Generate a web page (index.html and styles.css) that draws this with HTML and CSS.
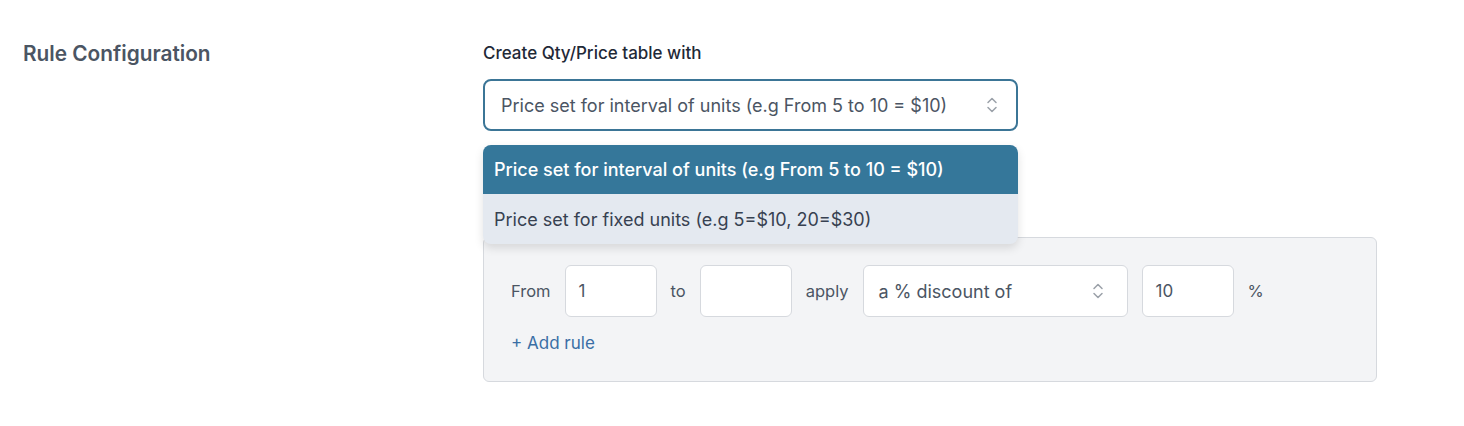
FILE: index.html
```html
<!DOCTYPE html>
<html lang="en">
<head>
    <meta charset="UTF-8">
    <meta name="viewport" content="width=device-width, initial-scale=1.0">
    <title>Rule Configuration</title>
    <link rel="stylesheet" href="styles.css">
</head>
<body>
    <div class="settings">
        <h2 class="sectionTitle">Rule Configuration</h2>
        <div class="sectionBody">
            <label class="fieldLabel">Create Qty/Price table with</label>
            <div class="selectWrap">
                <div class="select selectFocused">
                    <span>Price set for interval of units (e.g From 5 to 10 = $10)</span>
                    <svg class="chevrons" width="12" height="18" viewBox="0 0 12 18"><path d="M2 6.5L6 2.5L10 6.5M2 11.5L6 15.5L10 11.5" fill="none" stroke="#9aa0a8" stroke-width="1.5" stroke-linecap="round" stroke-linejoin="round"/></svg>
                </div>
                <ul class="menu">
                    <li class="menuItem active">Price set for interval of units (e.g From 5 to 10 = $10)</li>
                    <li class="menuItem">Price set for fixed units (e.g 5=$10, 20=$30)</li>
                </ul>
            </div>

            <div class="rulesBox">
                <div class="ruleRow">
                    <span class="ruleText">From</span>
                    <div class="input">1</div>
                    <span class="ruleText">to</span>
                    <div class="input"></div>
                    <span class="ruleText">apply</span>
                    <div class="input wideSelect">
                        <span>a % discount of</span>
                        <svg class="chevrons" width="12" height="18" viewBox="0 0 12 18"><path d="M2 6.5L6 2.5L10 6.5M2 11.5L6 15.5L10 11.5" fill="none" stroke="#9aa0a8" stroke-width="1.5" stroke-linecap="round" stroke-linejoin="round"/></svg>
                    </div>
                    <div class="input">10</div>
                    <span class="ruleText">%</span>
                </div>
                <a class="addRule" href="#">+ Add rule</a>
            </div>
        </div>
    </div>
</body>
</html>
```

FILE: styles.css
```css
* {
    font-family: Inter, "Noto Sans", sans-serif;
    box-sizing: border-box;
}

body {
    margin: 0;
    background-color: #ffffff;
}

.settings {
    display: flex;
    align-items: flex-start;
    padding: 41px 0 0 23px;
}

.sectionTitle {
    width: 460px;
    margin: 0;
    font-size: 20.8px;
    line-height: 26px;
    font-weight: 600;
    color: #4b5563;
}

.sectionBody {
    display: flex;
    flex-direction: column;
    width: 894px;
}

.fieldLabel {
    font-size: 17px;
    line-height: 24px;
    font-weight: 500;
    color: #1f2937;
    margin-bottom: 14px;
}

.selectWrap {
    position: relative;
    width: 535px;
}

.select {
    display: flex;
    align-items: center;
    justify-content: space-between;
    height: 52px;
    padding: 0 18px 0 16px;
    border: 1px solid #d1d5db;
    border-radius: 8px;
    font-size: 18px;
    color: #4b5563;
}

.selectFocused {
    border: 2px solid #3b7596;
}

.menu {
    position: absolute;
    top: calc(100% + 14px);
    left: 0;
    right: 0;
    margin: 0;
    padding: 0;
    list-style: none;
    border-radius: 8px;
    overflow: hidden;
    background-color: #e4e9f0;
    box-shadow: 0 4px 10px rgba(0, 0, 0, 0.12);
    z-index: 2;
}

.menuItem {
    padding: 0 11px;
    font-size: 18px;
    color: #374151;
    height: 50px;
    display: flex;
    align-items: center;
}

.menuItem.active {
    height: 49px;
    background-color: #35779a;
    color: #ffffff;
    font-weight: 500;
}

.rulesBox {
    margin-top: 106px;
    padding: 27px 27px 26px;
    background-color: #f3f4f6;
    border: 1px solid #d6d9de;
    border-radius: 6px;
}

.ruleRow {
    display: flex;
    align-items: center;
    gap: 14px;
}

.ruleText {
    font-size: 16.5px;
    color: #4b5563;
}

.input {
    display: flex;
    align-items: center;
    justify-content: space-between;
    width: 92px;
    height: 52px;
    padding: 0 13px;
    background-color: #ffffff;
    border: 1px solid #d6d9de;
    border-radius: 6px;
    font-size: 17px;
    color: #4b5563;
}

.wideSelect {
    width: 265px;
    padding: 0 23px 0 15px;
    font-size: 18px;
}

.addRule {
    display: inline-block;
    margin-top: 14px;
    font-size: 17px;
    line-height: 24px;
    color: #3a6ea5;
    text-decoration: none;
}
```
